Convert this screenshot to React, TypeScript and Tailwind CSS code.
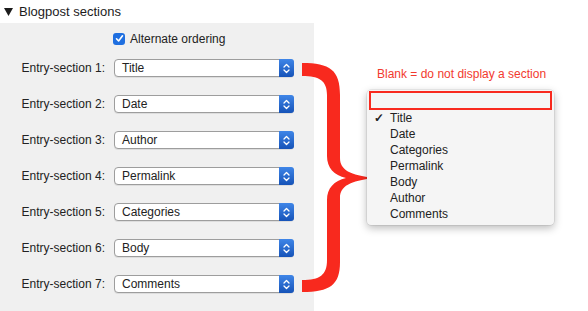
import React from "react";

const rows = ["Title", "Date", "Author", "Permalink", "Categories", "Body", "Comments"];
const menuItems = ["Title", "Date", "Categories", "Permalink", "Body", "Author", "Comments"];

function Stepper() {
  return (
    <div className="flex h-full w-[15px] items-center justify-center rounded-r-[3px] bg-gradient-to-b from-[#3f86e8] to-[#1653b8]">
      <svg width="7" height="11" viewBox="0 0 7 11" fill="none">
        <path d="M1 4 L3.5 1.5 L6 4" stroke="white" strokeWidth="1.3" strokeLinecap="round" strokeLinejoin="round" />
        <path d="M1 7 L3.5 9.5 L6 7" stroke="white" strokeWidth="1.3" strokeLinecap="round" strokeLinejoin="round" />
      </svg>
    </div>
  );
}

export default function App() {
  return (
    <div
      className="relative h-[311px] w-[588px] overflow-hidden bg-white text-[#222]"
      style={{ fontFamily: '"Liberation Sans", Arial, sans-serif' }}
    >
      <div className="flex h-[23px] items-center pl-[4px] text-[13px] text-[#1c1c1c]">
        <svg width="9" height="8" viewBox="0 0 9 8" className="mr-[6px]">
          <path d="M0 0 L9 0 L4.5 8 Z" fill="#1c1c1c" />
        </svg>
        <span>Blogpost sections</span>
      </div>
      <div className="h-[288px] w-[314px] bg-[#f0f0f0] pt-[9px]">
        <div className="flex h-[13px] items-center pl-[113px]">
          <div className="flex h-[12px] w-[12px] items-center justify-center rounded-[3px] bg-[#1f6fe0]">
            <svg width="9" height="9" viewBox="0 0 9 9" fill="none">
              <path d="M1.5 4.8 L3.6 7 L7.5 1.8" stroke="white" strokeWidth="1.6" strokeLinecap="round" strokeLinejoin="round" />
            </svg>
          </div>
          <span className="ml-[5px] text-[12px]">Alternate ordering</span>
        </div>
        <div className="mt-[14px] flex flex-col gap-[18px]">
          {rows.map((r, i) => (
            <div key={r} className="flex h-[18px] items-center">
              <div className="w-[105px] pr-0 text-right text-[12px]">Entry-section {i + 1}:</div>
              <div className="ml-[9px] flex h-[18px] w-[180px] items-stretch rounded-[4px] border border-[#9d9d9d] bg-white shadow-[0_1px_0_rgba(0,0,0,0.08)]">
                <div className="flex flex-1 items-center pl-[7px] text-[12px]">{r}</div>
                <div className="-my-px -mr-px">
                  <Stepper />
                </div>
              </div>
            </div>
          ))}
        </div>
      </div>

      <div className="absolute left-[377px] top-[66px] text-[12px] leading-[16px] text-[#f23a2e]">
        Blank = do not display a section
      </div>

      <svg className="absolute left-0 top-0" width="588" height="311" viewBox="0 0 588 311">
        <path
          d="M302 63 C330 63 340 70 340 95 L340 158 C340 170 350 175 374 178 C350 181 340 186 340 198 L340 262 C340 285 330 292 302 292 L302 280 C320 280 327 275 327 260 L327 200 C327 188 334 181 346 178 C334 175 327 168 327 156 L327 95 C327 81 320 76 302 76 Z"
          fill="#f8291e"
        />
      </svg>

      <div className="absolute left-[367px] top-[90px] w-[187px] rounded-[4px] bg-[#f5f5f5] pb-[3px] pt-[1px] shadow-[0_3px_9px_rgba(0,0,0,0.28),0_0_0_0.5px_rgba(0,0,0,0.12)]">
        <div className="mx-[2px] h-[19px] border-2 border-[#f8291e]"></div>
        {menuItems.map((m, i) => (
          <div key={m} className="relative flex h-[16px] items-center pl-[23px] text-[12px] text-[#222]">
            {i === 0 && <span className="absolute left-[7px] text-[12px] font-bold">✓</span>}
            {m}
          </div>
        ))}
      </div>
    </div>
  );
}
